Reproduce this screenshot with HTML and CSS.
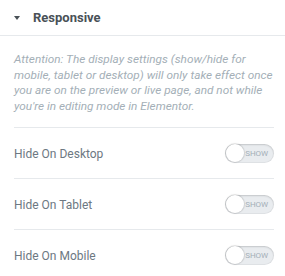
FILE: index.html
```html
<!DOCTYPE html>
<html>
<head>
<meta charset="utf-8">
<link rel="stylesheet" href="styles.css">
</head>
<body>
<div class="panel">
  <div class="section-head">
    <span class="caret"></span>
    <span class="section-title">Responsive</span>
  </div>
  <div class="section-body">
    <p class="notice">Attention: The display settings (show/hide for<br>mobile, tablet or desktop) will only take effect once<br>you are on the preview or live page, and not while<br>you're in editing mode in Elementor.</p>
    <div class="row">
      <span class="label">Hide On Desktop</span>
      <span class="switch"><span class="knob"></span><span class="switch-text">Show</span></span>
    </div>
    <div class="row">
      <span class="label">Hide On Tablet</span>
      <span class="switch"><span class="knob"></span><span class="switch-text">Show</span></span>
    </div>
    <div class="row last">
      <span class="label">Hide On Mobile</span>
      <span class="switch"><span class="knob"></span><span class="switch-text">Show</span></span>
    </div>
  </div>
</div>
</body>
</html>
```
FILE: styles.css
```css
html, body {
  margin: 0;
  padding: 0;
  background: #fff;
}
body {
  font-family: Roboto, "Liberation Sans", Arial, sans-serif;
  width: 285px;
}
.section-head {
  height: 35px;
  border-bottom: 1px solid #e6e9ec;
  display: flex;
  align-items: center;
  padding-left: 14px;
  box-sizing: content-box;
}
.caret {
  width: 0;
  height: 0;
  border-left: 3.5px solid transparent;
  border-right: 3.5px solid transparent;
  border-top: 4px solid #495157;
  margin-right: 13px;
  margin-top: 1px;
}
.section-title {
  font-size: 13px;
  font-weight: 700;
  color: #495157;
}
.section-body {
  padding: 0 11px 0 14px;
}
.notice {
  margin: 0;
  padding: 16px 0 13px;
  font-size: 11.8px;
  line-height: 15.5px;
  font-style: italic;
  color: #a4afb7;
  white-space: nowrap;
  border-bottom: 1px solid #e6e9ec;
}
.row {
  height: 50px;
  display: flex;
  align-items: center;
  justify-content: space-between;
  border-bottom: 1px solid #e6e9ec;
}
.row.last {
  border-bottom: none;
}
.label {
  font-size: 12px;
  color: #6d7882;
  margin-top: 1px;
}
.switch {
  position: relative;
  width: 49px;
  height: 19px;
  border-radius: 10px;
  background: #e9ecef;
  box-shadow: inset 0 1px 2px rgba(0,0,0,0.12), inset 0 0 0 1px rgba(0,0,0,0.04);
  display: flex;
  align-items: center;
  justify-content: flex-end;
  box-sizing: border-box;
  padding-right: 6px;
}
.knob {
  position: absolute;
  left: 1px;
  top: 0.5px;
  width: 18px;
  height: 18px;
  border-radius: 50%;
  background: #fff;
  box-shadow: 0 0 1px 1px rgba(0,0,0,0.12);
}
.switch-text {
  font-size: 8px;
  text-transform: uppercase;
  color: #a4afb7;
  letter-spacing: -0.1px;
}
```
